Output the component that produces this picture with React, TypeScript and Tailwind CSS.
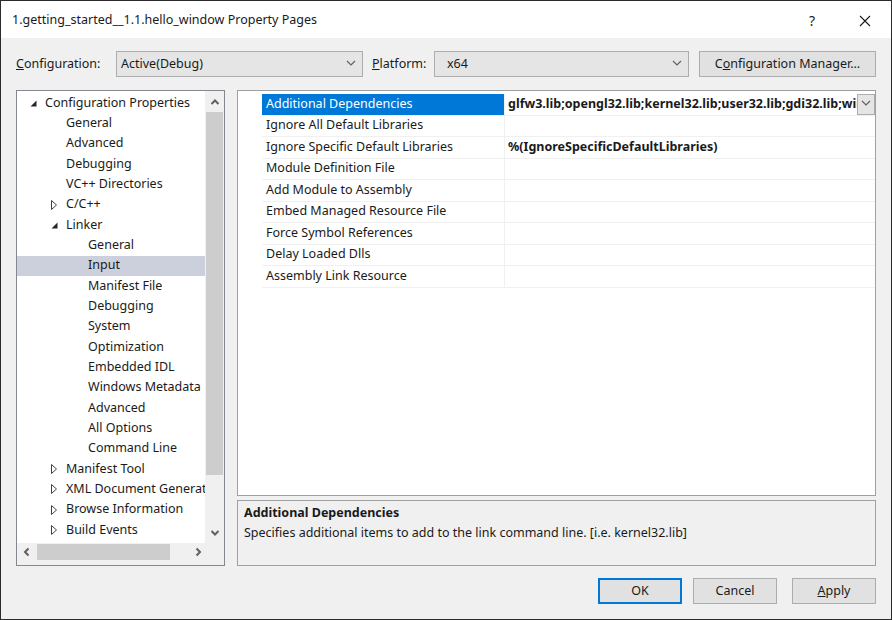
import React from "react";

type TreeItem = {
  label: string;
  level: 0 | 1 | 2;
  toggle?: "open" | "closed";
  selected?: boolean;
};

const treeItems: TreeItem[] = [
  { label: "Configuration Properties", level: 0, toggle: "open" },
  { label: "General", level: 1 },
  { label: "Advanced", level: 1 },
  { label: "Debugging", level: 1 },
  { label: "VC++ Directories", level: 1 },
  { label: "C/C++", level: 1, toggle: "closed" },
  { label: "Linker", level: 1, toggle: "open" },
  { label: "General", level: 2 },
  { label: "Input", level: 2, selected: true },
  { label: "Manifest File", level: 2 },
  { label: "Debugging", level: 2 },
  { label: "System", level: 2 },
  { label: "Optimization", level: 2 },
  { label: "Embedded IDL", level: 2 },
  { label: "Windows Metadata", level: 2 },
  { label: "Advanced", level: 2 },
  { label: "All Options", level: 2 },
  { label: "Command Line", level: 2 },
  { label: "Manifest Tool", level: 1, toggle: "closed" },
  { label: "XML Document Generator", level: 1, toggle: "closed" },
  { label: "Browse Information", level: 1, toggle: "closed" },
  { label: "Build Events", level: 1, toggle: "closed" },
];

const properties = [
  { name: "Additional Dependencies", value: "glfw3.lib;opengl32.lib;kernel32.lib;user32.lib;gdi32.lib;winspool.lib;comdlg32.lib" },
  { name: "Ignore All Default Libraries", value: "" },
  { name: "Ignore Specific Default Libraries", value: "%(IgnoreSpecificDefaultLibraries)" },
  { name: "Module Definition File", value: "" },
  { name: "Add Module to Assembly", value: "" },
  { name: "Embed Managed Resource File", value: "" },
  { name: "Force Symbol References", value: "" },
  { name: "Delay Loaded Dlls", value: "" },
  { name: "Assembly Link Resource", value: "" },
];

const levelPad = ["pl-[13px]", "pl-[34px]", "pl-[56px]"];

function Chevron({ dir = "down", className = "" }: { dir?: "down" | "up" | "left" | "right"; className?: string }) {
  const pts = {
    down: "1,2 5,6 9,2",
    up: "1,6 5,2 9,6",
    left: "6,1 2,5 6,9",
    right: "3,1 7,5 3,9",
  }[dir];
  return (
    <svg width="10" height="10" viewBox="0 0 10 10" className={className}>
      <polyline points={pts} fill="none" stroke="currentColor" strokeWidth="1.2" />
    </svg>
  );
}

function ScrollArrow({ dir }: { dir: "down" | "up" | "left" | "right" }) {
  const pts = {
    down: "1.5,3 5,6.5 8.5,3",
    up: "1.5,7 5,3.5 8.5,7",
    left: "6.5,1.5 3,5 6.5,8.5",
    right: "3.5,1.5 7,5 3.5,8.5",
  }[dir];
  return (
    <svg width="10" height="10" viewBox="0 0 10 10">
      <polyline points={pts} fill="none" stroke="#606060" strokeWidth="2" />
    </svg>
  );
}

function Toggle({ kind }: { kind?: "open" | "closed" }) {
  if (kind === "open") {
    return (
      <svg width="7" height="7" viewBox="0 0 7 7">
        <polygon points="6.5,0.5 6.5,6.5 0.5,6.5" fill="#262626" />
      </svg>
    );
  }
  if (kind === "closed") {
    return (
      <svg width="6" height="10" viewBox="0 0 6 10">
        <polygon points="0.5,0.5 5.5,5 0.5,9.5" fill="none" stroke="#404040" strokeWidth="1" />
      </svg>
    );
  }
  return null;
}

function ComboBox({ value, className }: { value: string; className: string }) {
  return (
    <div className={`flex h-[26px] items-center justify-between border border-[#adadad] bg-[#e5e5e5] pl-[4px] pr-[6px] ${className}`}>
      <span>{value}</span>
      <Chevron className="text-[#606060]" />
    </div>
  );
}

function TreePanel() {
  return (
    <div className="flex h-[476px] w-[209px] flex-col border border-[#828790] bg-[#f0f0f0]">
      <div className="flex min-h-0 flex-1">
        <div className="flex-1 overflow-hidden bg-white pt-[2px]">
          {treeItems.map((item, i) => (
            <div
              key={i}
              className={`flex h-[20.33px] items-center whitespace-nowrap ${levelPad[item.level]} ${item.selected ? "bg-[#ccd0dc]" : ""}`}
            >
              <span className="flex w-[15px] shrink-0 items-center">
                <Toggle kind={item.toggle} />
              </span>
              <span>{item.label}</span>
            </div>
          ))}
        </div>
        <div className="flex w-[19px] flex-col items-center bg-[#f0f0f0]">
          <div className="flex h-[21px] items-center justify-center">
            <ScrollArrow dir="up" />
          </div>
          <div className="w-full flex-1 px-[1px]">
            <div className="h-[363px] w-full bg-[#cdcdcd]" />
          </div>
          <div className="flex h-[21px] items-center justify-center">
            <ScrollArrow dir="down" />
          </div>
        </div>
      </div>
      <div className="flex h-[22px] items-start">
        <div className="flex h-[17px] flex-1 items-center">
          <div className="flex w-[20px] justify-center">
            <ScrollArrow dir="left" />
          </div>
          <div className="h-[16px] w-[133px] bg-[#cdcdcd]" />
          <div className="flex-1" />
          <div className="flex w-[20px] justify-center">
            <ScrollArrow dir="right" />
          </div>
        </div>
        <div className="w-[16px]" />
      </div>
    </div>
  );
}

function PropertyGrid() {
  return (
    <div className="h-[406px] border border-[#a0a0a0] bg-white pt-[3px]">
      {properties.map((p, i) => {
        const selected = i === 0;
        return (
          <div key={p.name} className="flex h-[21.5px]">
            <div className="w-[24px] shrink-0" />
            <div
              className={`flex w-[242px] shrink-0 items-center border-b border-[#f0f0f0] pl-[4px] ${selected ? "border-[#0078d7] bg-[#0078d7] text-white" : ""}`}
            >
              {p.name}
            </div>
            <div className="flex min-w-0 flex-1 items-center border-b border-l border-[#f0f0f0]">
              <span className="min-w-0 flex-1 overflow-hidden whitespace-nowrap pl-[3px] font-bold">{p.value}</span>
              {selected ? (
                <div className="flex h-[21px] w-[18px] shrink-0 items-center justify-center border border-[#adadad] bg-[#e5e5e5]">
                  <Chevron className="text-[#606060]" />
                </div>
              ) : null}
            </div>
          </div>
        );
      })}
    </div>
  );
}

function DialogButton({ children, primary }: { children: React.ReactNode; primary?: boolean }) {
  return (
    <button
      type="button"
      className={`flex h-[26px] w-[84px] items-center justify-center border bg-[#e1e1e1] ${primary ? "border-[#0078d7] shadow-[inset_0_0_0_1px_#0078d7]" : "border-[#adadad]"}`}
    >
      {children}
    </button>
  );
}

export default function App() {
  return (
    <div
      className="flex h-[620px] w-[892px] flex-col border border-[#2b2b2b] bg-[#f0f0f0] text-[12.5px] text-[#1a1a1a]"
      style={{ fontFamily: '"Noto Sans", "Open Sans", sans-serif' }}
    >
      <div className="flex h-[37px] shrink-0 items-center bg-white pl-[11px] pt-[2px]">
        <span className="flex-1">1.getting_started__1.1.hello_window Property Pages</span>
        <span className="w-[50px] text-[14px]">?</span>
        <svg width="12" height="12" viewBox="0 0 12 12" className="mr-[20px]">
          <path d="M1 1 L11 11 M11 1 L1 11" stroke="#1a1a1a" strokeWidth="1.1" />
        </svg>
      </div>

      <div className="flex flex-1 flex-col px-[15px]">
        <div className="mt-[13px] flex h-[26px] items-center">
          <span className="w-[100px]">
            <span className="underline">C</span>onfiguration:
          </span>
          <ComboBox value="Active(Debug)" className="w-[247px]" />
          <span className="ml-[9px] w-[62px]">
            <span className="underline">P</span>latform:
          </span>
          <ComboBox value="x64" className="w-[255px] pl-[12px]" />
          <div className="flex-1" />
          <button type="button" className="flex h-[26px] w-[177px] items-center justify-center border border-[#adadad] bg-[#e1e1e1]">
            C<span className="underline">o</span>nfiguration Manager...
          </button>
        </div>

        <div className="mt-[13px] flex gap-[12px]">
          <TreePanel />
          <div className="flex min-w-0 flex-1 flex-col gap-[4px]">
            <PropertyGrid />
            <div className="h-[66px] border border-[#a0a0a0] px-[6px] pt-[2px] leading-[20px]">
              <div className="font-bold">Additional Dependencies</div>
              <div>Specifies additional items to add to the link command line. [i.e. kernel32.lib]</div>
            </div>
          </div>
        </div>

        <div className="mt-[12px] flex justify-end gap-[11px]">
          <DialogButton primary>OK</DialogButton>
          <DialogButton>Cancel</DialogButton>
          <div className="ml-[4px]">
            <DialogButton>
              <span className="underline">A</span>pply
            </DialogButton>
          </div>
        </div>
      </div>
    </div>
  );
}
